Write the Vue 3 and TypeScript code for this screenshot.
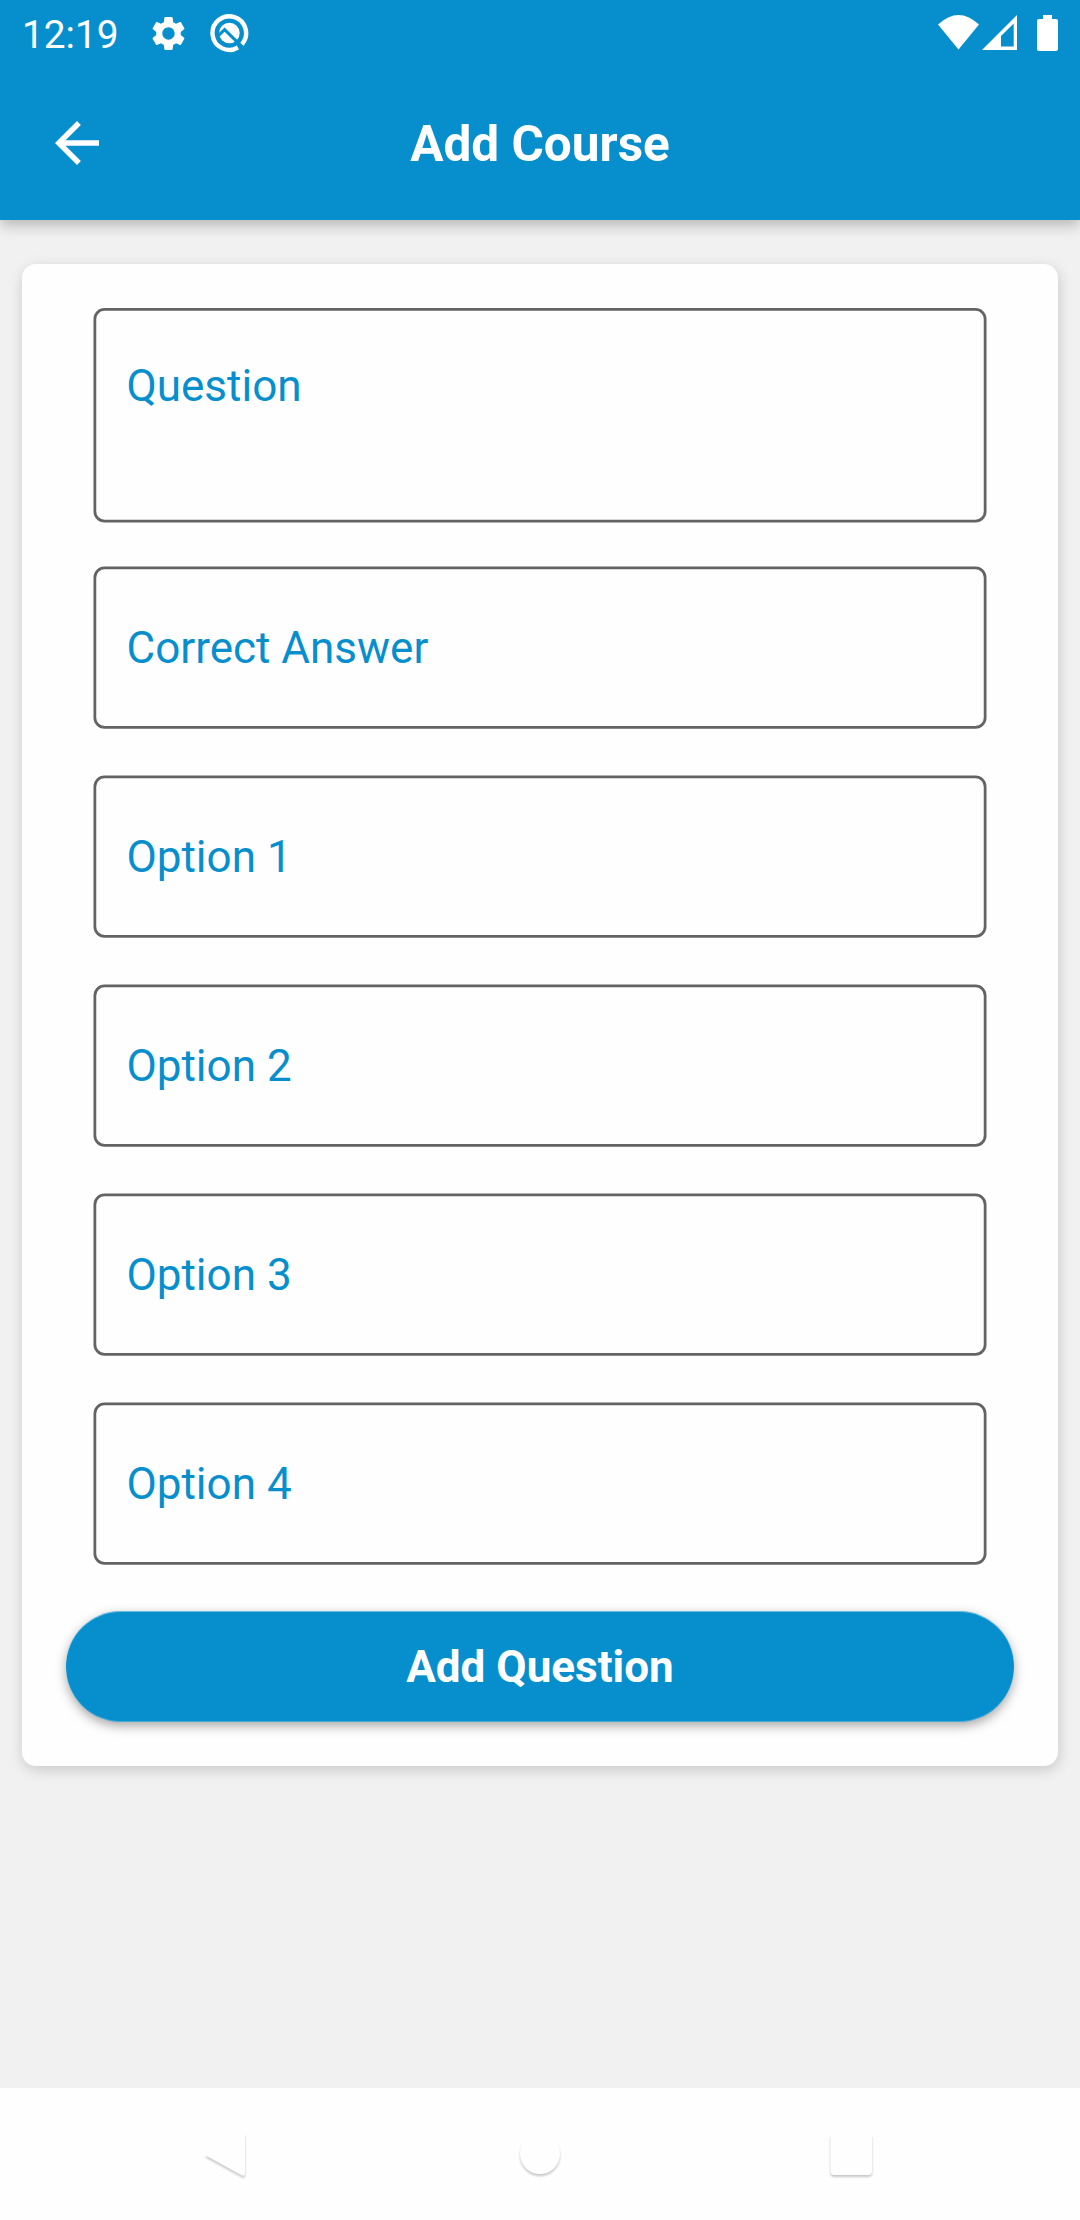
<script setup lang="ts">
interface Field {
  label: string
  tall?: boolean
}

const fields: Field[] = [
  { label: 'Question', tall: true },
  { label: 'Correct Answer' },
  { label: 'Option 1' },
  { label: 'Option 2' },
  { label: 'Option 3' },
  { label: 'Option 4' },
]
</script>

<template>
  <div class="screen">
    <header class="top">
      <div class="status">
        <span class="time">12:19</span>
        <svg class="gear" viewBox="0 0 24 24">
          <path d="M19.14 12.94c.04-.3.06-.61.06-.94 0-.32-.02-.64-.07-.94l2.03-1.58c.18-.14.23-.41.12-.61l-1.92-3.32c-.12-.22-.37-.29-.59-.22l-2.39.96c-.5-.38-1.03-.7-1.62-.94l-.36-2.54c-.04-.24-.24-.41-.48-.41h-3.84c-.24 0-.43.17-.47.41l-.36 2.54c-.59.24-1.13.57-1.62.94l-2.39-.96c-.22-.08-.47 0-.59.22L2.74 8.87c-.12.21-.08.47.12.61l2.03 1.58c-.05.3-.09.63-.09.94s.02.64.07.94l-2.03 1.58c-.18.14-.23.41-.12.61l1.92 3.32c.12.22.37.29.59.22l2.39-.96c.5.38 1.03.7 1.62.94l.36 2.54c.05.24.24.41.48.41h3.84c.24 0 .44-.17.47-.41l.36-2.54c.59-.24 1.13-.56 1.62-.94l2.39.96c.22.08.47 0 .59-.22l1.92-3.32c.12-.22.07-.47-.12-.61l-2.01-1.58zM12 15.6c-1.98 0-3.6-1.62-3.6-3.6s1.62-3.6 3.6-3.6 3.6 1.62 3.6 3.6-1.62 3.6-3.6 3.6z" />
        </svg>
        <svg class="beta" viewBox="0 0 40 40">
          <path class="ring" d="M28.9 34.5A16.8 16.8 0 1 1 32.7 31.4" />
          <circle cx="20.4" cy="20" r="10.3" />
          <path class="cut" d="M8.5 23.3L15.6 16.6L34 34.6" />
        </svg>
        <svg class="signals" viewBox="0 0 124 40">
          <path d="M0 11.5Q20.5-7.5 41 11.5L20.5 36.5z" />
          <path fill-rule="evenodd" d="M44 37L79 2V37zM63 23V33.5H75.7V10.5z" />
          <path d="M105 2h9v4h4a2 2 0 0 1 2 2v28a2 2 0 0 1-2 2h-17a2 2 0 0 1-2-2V8a2 2 0 0 1 2-2h4z" />
        </svg>
      </div>
      <div class="bar">
        <svg class="back" viewBox="0 0 24 24">
          <path d="M20 11H7.83l5.59-5.59L12 4l-8 8 8 8 1.41-1.41L7.83 13H20v-2z" />
        </svg>
        <h1>Add Course</h1>
      </div>
    </header>

    <main class="content">
      <form class="card" @submit.prevent>
        <div v-for="f in fields" :key="f.label" class="field" :class="{ tall: f.tall }">
          <svg v-if="f.tall" class="outline" viewBox="0 0 894 215">
            <rect x="1.875" y="1.375" width="890.25" height="211.75" rx="9.6" />
          </svg>
          <svg v-else class="outline" viewBox="0 0 894 163">
            <rect x="1.875" y="1.875" width="890.25" height="159.5" rx="9.6" />
          </svg>
          <span class="label">{{ f.label }}</span>
        </div>
        <button class="submit" type="submit">Add Question</button>
      </form>
    </main>

    <nav class="nav">
      <svg viewBox="0 0 60 60"><path d="M11.2 28.2L47 7.6Q50 6 50 9V47Q50 51 47 49.4L11.2 29.8Q10.2 29 11.2 28.2z" /></svg>
      <svg viewBox="0 0 60 60"><circle cx="32" cy="28" r="20" /></svg>
      <svg viewBox="0 0 60 60"><rect x="9.5" y="7.5" width="41.5" height="41.5" rx="4" /></svg>
    </nav>
  </div>
</template>

<style>
body {
  margin: 0;
}
</style>

<style scoped>
.screen {
  display: flex;
  flex-direction: column;
  width: 1080px;
  height: 2220px;
  overflow: hidden;
  background: #f1f1f1;
  font-family: Roboto, sans-serif;
}
.top {
  display: flex;
  flex-direction: column;
  height: 220px;
  background: #078fcd;
  color: #fff;
  box-shadow: 0 5px 14px rgba(0, 0, 0, 0.25);
}
svg {
  display: block;
  fill: #fff;
}
.status {
  display: flex;
  height: 66px;
  box-sizing: border-box;
  padding-left: 22px;
}
.time {
  width: 126px;
  padding-top: 12px;
  font-size: 38.8px;
  line-height: 46px;
}
.gear {
  width: 41px;
  height: 41px;
  margin-top: 13px;
}
.beta {
  width: 40px;
  height: 40px;
  margin: 13px 0 0 20px;
}
.ring {
  fill: none;
  stroke: #fff;
  stroke-width: 4.4;
}
.cut {
  fill: none;
  stroke: #078fcd;
  stroke-width: 3;
}
.signals {
  width: 124px;
  height: 40px;
  margin: 13px 18px 0 auto;
}
.bar {
  display: grid;
  grid-template-columns: 66px 1fr 66px;
  align-items: center;
  height: 154px;
  padding: 0 44px;
  box-sizing: border-box;
}
.back {
  width: 66px;
  height: 66px;
}
h1 {
  margin: 2px 0 0;
  text-align: center;
  font-size: 49.5px;
  line-height: 66px;
  font-weight: 700;
}
.content {
  flex: 1;
  padding: 44px 22px 0;
}
.card {
  display: flex;
  flex-direction: column;
  align-items: center;
  height: 1502px;
  box-sizing: border-box;
  padding: 44px 44px 0;
  background: #fefefe;
  border-radius: 14px;
  box-shadow: 1px 4px 14px rgba(0, 0, 0, 0.17);
}
.field {
  display: grid;
  width: 894px;
  height: 163px;
  margin-bottom: 46px;
}
.field.tall {
  height: 215px;
  margin-bottom: 43px;
}
.outline,
.label {
  grid-area: 1 / 1;
}
.outline {
  width: 100%;
  height: 100%;
}
.outline rect {
  fill: none;
  stroke: #636363;
  stroke-width: 2.75;
}
.label {
  padding: 56px 33.5px 0;
  font-size: 44px;
  line-height: 52px;
  color: #078fcd;
}
.tall .label {
  padding-top: 52px;
}
.submit {
  width: 948px;
  height: 111px;
  flex: none;
  padding: 1px 0 0;
  border: 0;
  border-radius: 55px;
  background: #078fcd;
  color: #fff;
  font: 700 44px/110px Roboto, sans-serif;
  box-shadow: 0 4px 11px rgba(0, 0, 0, 0.34), inset 0 1px 0 rgba(255, 255, 255, 0.4), inset 0 -1px 0 rgba(255, 255, 255, 0.25);
}
.nav {
  display: flex;
  justify-content: space-between;
  height: 132px;
  padding: 38px 199px 0 195px;
  box-sizing: border-box;
  background: #fefefe;
}
.nav svg {
  width: 60px;
  height: 60px;
  fill: #fefefe;
  filter: drop-shadow(0 2px 1px rgba(0, 0, 0, 0.22));
}
</style>
